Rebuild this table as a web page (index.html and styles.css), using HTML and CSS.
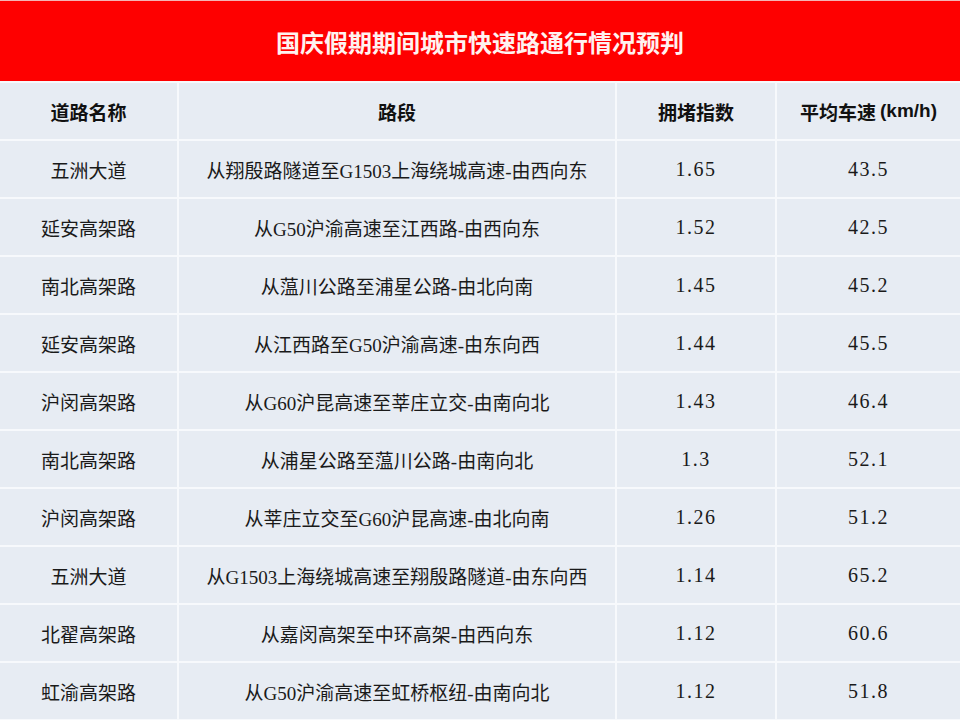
FILE: index.html
```html
<!DOCTYPE html>
<html lang="zh-CN">
<head>
<meta charset="utf-8">
<title>国庆假期期间城市快速路通行情况预判</title>
<link rel="stylesheet" href="styles.css">
</head>
<body>
<div class="page">
  <div class="title">国庆假期期间城市快速路通行情况预判</div>
  <div class="table">
    <div class="cell head">道路名称</div>
    <div class="cell head">路段</div>
    <div class="cell head">拥堵指数</div>
    <div class="cell head">平均车速 <span class="unit">(km/h)</span></div>

    <div class="cell">五洲大道</div>
    <div class="cell">从翔殷路隧道至G1503上海绕城高速-由西向东</div>
    <div class="cell num">1.65</div>
    <div class="cell num">43.5</div>

    <div class="cell">延安高架路</div>
    <div class="cell">从G50沪渝高速至江西路-由西向东</div>
    <div class="cell num">1.52</div>
    <div class="cell num">42.5</div>

    <div class="cell">南北高架路</div>
    <div class="cell">从蕰川公路至浦星公路-由北向南</div>
    <div class="cell num">1.45</div>
    <div class="cell num">45.2</div>

    <div class="cell">延安高架路</div>
    <div class="cell">从江西路至G50沪渝高速-由东向西</div>
    <div class="cell num">1.44</div>
    <div class="cell num">45.5</div>

    <div class="cell">沪闵高架路</div>
    <div class="cell">从G60沪昆高速至莘庄立交-由南向北</div>
    <div class="cell num">1.43</div>
    <div class="cell num">46.4</div>

    <div class="cell">南北高架路</div>
    <div class="cell">从浦星公路至蕰川公路-由南向北</div>
    <div class="cell num">1.3</div>
    <div class="cell num">52.1</div>

    <div class="cell">沪闵高架路</div>
    <div class="cell">从莘庄立交至G60沪昆高速-由北向南</div>
    <div class="cell num">1.26</div>
    <div class="cell num">51.2</div>

    <div class="cell">五洲大道</div>
    <div class="cell">从G1503上海绕城高速至翔殷路隧道-由东向西</div>
    <div class="cell num">1.14</div>
    <div class="cell num">65.2</div>

    <div class="cell">北翟高架路</div>
    <div class="cell">从嘉闵高架至中环高架-由西向东</div>
    <div class="cell num">1.12</div>
    <div class="cell num">60.6</div>

    <div class="cell">虹渝高架路</div>
    <div class="cell">从G50沪渝高速至虹桥枢纽-由南向北</div>
    <div class="cell num">1.12</div>
    <div class="cell num">51.8</div>
  </div>
</div>
</body>
</html>
```
FILE: styles.css
```css
html, body {
  margin: 0;
  padding: 0;
  background: #f7f9fc;
}
.page {
  width: 960px;
  height: 720px;
  overflow: hidden;
  display: flex;
  flex-direction: column;
}
.title {
  height: 80px;
  border-top: 1px solid #f4b4b4;
  background: #fe0000;
  color: #fff2f0;
  font-family: "Noto Sans CJK SC", sans-serif;
  font-weight: 700;
  font-size: 24px;
  display: flex;
  align-items: center;
  justify-content: center;
  letter-spacing: 0px;
}
.table {
  display: grid;
  grid-template-columns: 177px 436px 158px 183px;
  grid-auto-rows: 56px;
  gap: 2px;
  padding-top: 2px;
  background: #f7f9fc;
}
.cell {
  background: #e7ecf3;
  display: flex;
  align-items: center;
  justify-content: center;
  font-family: "Liberation Serif", "Noto Sans CJK SC", serif;
  font-size: 19px;
  color: #1a1a1a;
  white-space: nowrap;
}
.head {
  font-family: "Noto Sans CJK SC", sans-serif;
  font-weight: 700;
  color: #111;
}
.unit {
  font-family: "Liberation Sans", sans-serif;
  font-weight: 700;
  margin-left: 4px;
}
.num {
  font-size: 20px;
  letter-spacing: 1.5px;
}
```
